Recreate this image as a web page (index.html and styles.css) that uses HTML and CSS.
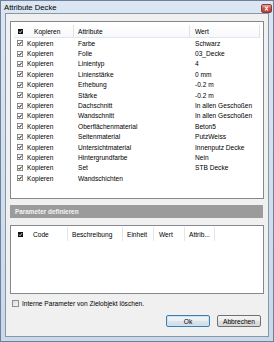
FILE: index.html
```html
<!DOCTYPE html>
<html>
<head>
<meta charset="utf-8">
<link rel="stylesheet" href="styles.css">
</head>
<body>
<div class="window">
  <div class="titlebar">
    <span class="title">Attribute Decke</span>
    <span class="close"><svg width="7" height="5" viewBox="0 0 14 10"><path d="M4 1 L10 9 M10 1 L4 9" stroke="#fff" stroke-width="2.4"/></svg></span>
  </div>
  <div class="content">
    <div class="listbox box1">
      <div class="head head1">
        <div class="hc c1"><svg class="hchk" width="5" height="5" viewBox="0 0 10 10"><rect x="0" y="0" width="10" height="10" fill="#111"/><path d="M2 5 L4.2 7.5 L8 2.5" stroke="#fff" stroke-width="1.6" fill="none"/></svg><span class="hk">Kopieren</span></div>
        <div class="hc c2">Attribute</div>
        <div class="hc c3">Wert</div>
      </div>
      <div class="rows">
        <div class="row"><div class="r1"><svg class="chk" width="6" height="6" viewBox="0 0 12 12"><rect x="0.75" y="0.75" width="10.5" height="10.5" fill="#fff" stroke="#6d6d6d" stroke-width="1.5"/><path d="M2.8 6 L5 8.6 L9.4 3.2" stroke="#111" stroke-width="2" fill="none"/></svg>Kopieren</div><div class="r2">Farbe</div><div class="r3">Schwarz</div></div>
        <div class="row"><div class="r1"><svg class="chk" width="6" height="6" viewBox="0 0 12 12"><rect x="0.75" y="0.75" width="10.5" height="10.5" fill="#fff" stroke="#6d6d6d" stroke-width="1.5"/><path d="M2.8 6 L5 8.6 L9.4 3.2" stroke="#111" stroke-width="2" fill="none"/></svg>Kopieren</div><div class="r2">Folie</div><div class="r3">03_Decke</div></div>
        <div class="row"><div class="r1"><svg class="chk" width="6" height="6" viewBox="0 0 12 12"><rect x="0.75" y="0.75" width="10.5" height="10.5" fill="#fff" stroke="#6d6d6d" stroke-width="1.5"/><path d="M2.8 6 L5 8.6 L9.4 3.2" stroke="#111" stroke-width="2" fill="none"/></svg>Kopieren</div><div class="r2">Linientyp</div><div class="r3">4</div></div>
        <div class="row"><div class="r1"><svg class="chk" width="6" height="6" viewBox="0 0 12 12"><rect x="0.75" y="0.75" width="10.5" height="10.5" fill="#fff" stroke="#6d6d6d" stroke-width="1.5"/><path d="M2.8 6 L5 8.6 L9.4 3.2" stroke="#111" stroke-width="2" fill="none"/></svg>Kopieren</div><div class="r2">Linienstärke</div><div class="r3">0 mm</div></div>
        <div class="row"><div class="r1"><svg class="chk" width="6" height="6" viewBox="0 0 12 12"><rect x="0.75" y="0.75" width="10.5" height="10.5" fill="#fff" stroke="#6d6d6d" stroke-width="1.5"/><path d="M2.8 6 L5 8.6 L9.4 3.2" stroke="#111" stroke-width="2" fill="none"/></svg>Kopieren</div><div class="r2">Erhebung</div><div class="r3">-0.2 m</div></div>
        <div class="row"><div class="r1"><svg class="chk" width="6" height="6" viewBox="0 0 12 12"><rect x="0.75" y="0.75" width="10.5" height="10.5" fill="#fff" stroke="#6d6d6d" stroke-width="1.5"/><path d="M2.8 6 L5 8.6 L9.4 3.2" stroke="#111" stroke-width="2" fill="none"/></svg>Kopieren</div><div class="r2">Stärke</div><div class="r3">-0.2 m</div></div>
        <div class="row"><div class="r1"><svg class="chk" width="6" height="6" viewBox="0 0 12 12"><rect x="0.75" y="0.75" width="10.5" height="10.5" fill="#fff" stroke="#6d6d6d" stroke-width="1.5"/><path d="M2.8 6 L5 8.6 L9.4 3.2" stroke="#111" stroke-width="2" fill="none"/></svg>Kopieren</div><div class="r2">Dachschnitt</div><div class="r3">In allen Geschoßen</div></div>
        <div class="row"><div class="r1"><svg class="chk" width="6" height="6" viewBox="0 0 12 12"><rect x="0.75" y="0.75" width="10.5" height="10.5" fill="#fff" stroke="#6d6d6d" stroke-width="1.5"/><path d="M2.8 6 L5 8.6 L9.4 3.2" stroke="#111" stroke-width="2" fill="none"/></svg>Kopieren</div><div class="r2">Wandschnitt</div><div class="r3">In allen Geschoßen</div></div>
        <div class="row"><div class="r1"><svg class="chk" width="6" height="6" viewBox="0 0 12 12"><rect x="0.75" y="0.75" width="10.5" height="10.5" fill="#fff" stroke="#6d6d6d" stroke-width="1.5"/><path d="M2.8 6 L5 8.6 L9.4 3.2" stroke="#111" stroke-width="2" fill="none"/></svg>Kopieren</div><div class="r2">Oberflächenmaterial</div><div class="r3">Beton5</div></div>
        <div class="row"><div class="r1"><svg class="chk" width="6" height="6" viewBox="0 0 12 12"><rect x="0.75" y="0.75" width="10.5" height="10.5" fill="#fff" stroke="#6d6d6d" stroke-width="1.5"/><path d="M2.8 6 L5 8.6 L9.4 3.2" stroke="#111" stroke-width="2" fill="none"/></svg>Kopieren</div><div class="r2">Seitenmaterial</div><div class="r3">PutzWeiss</div></div>
        <div class="row"><div class="r1"><svg class="chk" width="6" height="6" viewBox="0 0 12 12"><rect x="0.75" y="0.75" width="10.5" height="10.5" fill="#fff" stroke="#6d6d6d" stroke-width="1.5"/><path d="M2.8 6 L5 8.6 L9.4 3.2" stroke="#111" stroke-width="2" fill="none"/></svg>Kopieren</div><div class="r2">Untersichtmaterial</div><div class="r3">Innenputz Decke</div></div>
        <div class="row"><div class="r1"><svg class="chk" width="6" height="6" viewBox="0 0 12 12"><rect x="0.75" y="0.75" width="10.5" height="10.5" fill="#fff" stroke="#6d6d6d" stroke-width="1.5"/><path d="M2.8 6 L5 8.6 L9.4 3.2" stroke="#111" stroke-width="2" fill="none"/></svg>Kopieren</div><div class="r2">Hintergrundfarbe</div><div class="r3">Nein</div></div>
        <div class="row"><div class="r1"><svg class="chk" width="6" height="6" viewBox="0 0 12 12"><rect x="0.75" y="0.75" width="10.5" height="10.5" fill="#fff" stroke="#6d6d6d" stroke-width="1.5"/><path d="M2.8 6 L5 8.6 L9.4 3.2" stroke="#111" stroke-width="2" fill="none"/></svg>Kopieren</div><div class="r2">Set</div><div class="r3">STB Decke</div></div>
        <div class="row"><div class="r1"><svg class="chk" width="6" height="6" viewBox="0 0 12 12"><rect x="0.75" y="0.75" width="10.5" height="10.5" fill="#fff" stroke="#6d6d6d" stroke-width="1.5"/><path d="M2.8 6 L5 8.6 L9.4 3.2" stroke="#111" stroke-width="2" fill="none"/></svg>Kopieren</div><div class="r2">Wandschichten</div><div class="r3"></div></div>
      </div>
    </div>
    <div class="section">Parameter definieren</div>
    <div class="listbox box2">
      <div class="head head2">
        <div class="hc d1"><svg class="hchk2" width="5" height="5" viewBox="0 0 10 10"><rect x="0" y="0" width="10" height="10" fill="#111"/><path d="M2 5 L4.2 7.5 L8 2.5" stroke="#fff" stroke-width="1.6" fill="none"/></svg><span class="hk2">Code</span></div>
        <div class="hc d2">Beschreibung</div>
        <div class="hc d3">Einheit</div>
        <div class="hc d4">Wert</div>
        <div class="hc d5">Attrib...</div>
      </div>
    </div>
    <div class="option">
      <span class="ubox"></span>
      <span>Interne Parameter von Zielobjekt löschen.</span>
    </div>
    <div class="buttons">
      <div class="btn btn-default">Ok</div>
      <div class="btn">Abbrechen</div>
    </div>
  </div>
</div>
</body>
</html>
```

FILE: styles.css
```css
* { box-sizing: border-box; }
html, body { margin: 0; padding: 0; }
body {
  width: 274px;
  height: 342px;
  font-family: "Liberation Sans", Arial, sans-serif;
  font-size: 6.6px;
  color: #000;
  background: #fff;
}
.window {
  width: 274px;
  height: 342px;
  border: 1px solid #6f8199;
  background: linear-gradient(#dbe6f3, #c9d8eb);
  padding: 0 4px 4px 4px;
  display: flex;
  flex-direction: column;
}
.titlebar {
  height: 12px;
  display: flex;
  align-items: center;
  justify-content: space-between;
  margin-left: -1px;
  margin-right: -3px;
}
.title {
  font-size: 7.7px;
  padding-top: 1px;
}
.close {
  width: 11px;
  height: 9px;
  margin-top: 2px;
  border: 1px solid #8a3a3a;
  border-radius: 2px;
  background: linear-gradient(#e8a493, #c75050 50%, #b83c30);
  display: flex;
  align-items: center;
  justify-content: center;
}
.content {
  flex: 1;
  border: 1px solid #8796a8;
  background: #f0f0f0;
  padding: 7px 4px 0 4px;
  display: flex;
  flex-direction: column;
}
.listbox {
  background: #fff;
  border: 1px solid #828790;
}
.box1 {
  height: 178px;
  padding: 3px;
}
.head {
  display: grid;
  background: linear-gradient(#ffffff, #f7f8f9);
  border-bottom: 1px solid #e3e6ea;
}
.head1 {
  grid-template-columns: 60px 116px 70px;
  height: 13px;
}
.hc {
  display: flex;
  align-items: center;
  border-right: 1px solid #dfe2e6;
  white-space: nowrap;
  overflow: hidden;
}
.c1 { padding-left: 4px; }
.hk { margin-left: 11px; }
.c2 { padding-left: 4px; }
.c3 { padding-left: 5px; }
.rows { display: flex; flex-direction: column; }
.row {
  display: grid;
  grid-template-columns: 60px 116px 70px;
  height: 10.4px;
  align-items: center;
}
.r1 { display: flex; align-items: center; padding-left: 3px; }
.chk { margin-right: 4px; flex: none; }
.r2 { padding-left: 4px; white-space: nowrap; }
.r3 { padding-left: 5px; white-space: nowrap; }
.section {
  margin-top: 6px;
  height: 13px;
  background: #9b9b9b;
  color: #f4f4f4;
  font-weight: bold;
  font-size: 6.4px;
  display: flex;
  align-items: center;
  padding-left: 5px;
  margin-right: 1px;
}
.box2 {
  margin-top: 7px;
  height: 69px;
}
.head2 {
  grid-template-columns: 57px 55px 31px 31px 30px;
  height: 15px;
  background: #fff;
  border-bottom: none;
  padding-top: 1px;
}
.head2 .hc { border-right: 1px solid #e3e6ea; }
.d1 { padding-left: 7px; }
.hk2 { margin-left: 10px; }
.d2 { padding-left: 4px; }
.d3 { padding-left: 4px; }
.d4 { padding-left: 5px; }
.d5 { padding-left: 4px; }
.option {
  margin-top: 5px;
  height: 9px;
  display: flex;
  align-items: center;
  gap: 3px;
  padding-left: 2px;
}
.ubox {
  width: 7px;
  height: 7px;
  border: 1px solid #8e8f8f;
  background: linear-gradient(135deg, #dcdcdc, #f6f6f6);
}
.buttons {
  margin-top: 7px;
  display: flex;
  justify-content: flex-end;
  gap: 7px;
  padding-right: 3px;
}
.btn {
  width: 44px;
  height: 12px;
  border: 1px solid #707070;
  border-radius: 2px;
  background: linear-gradient(#f4f4f4 0%, #ececec 50%, #e0e0e0 51%, #d6d6d6 100%);
  display: flex;
  align-items: center;
  justify-content: center;
}
.btn-default {
  border-color: #3c7fb1;
  background: linear-gradient(#f2f6f9 0%, #e9eef2 50%, #dde4ea 51%, #d3dce4 100%);
  box-shadow: inset 0 0 0 1px #c8e3f4;
}
```
